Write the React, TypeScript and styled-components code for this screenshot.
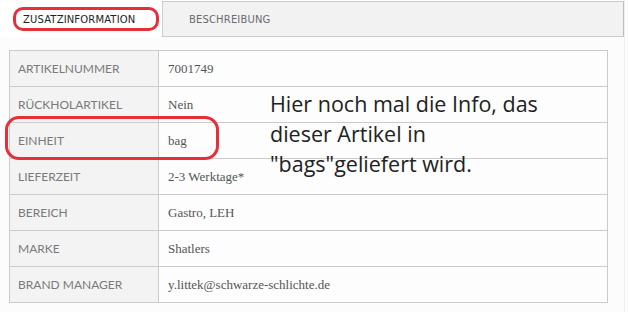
import React from "react";
import styled, { createGlobalStyle } from "styled-components";

const GlobalStyle = createGlobalStyle`
  html, body { margin: 0; padding: 0; background: #fcfcfc; }
  * { box-sizing: border-box; }
`;

const Page = styled.div`
  position: relative;
  width: 628px;
  height: 312px;
  overflow: hidden;
  background: #fcfcfc;
`;

const Frame = styled.div`
  width: 625px;
  height: 312px;
  border-right: 1px solid #efefef;
  background: #fcfcfc;
`;

const TabBar = styled.div`
  display: flex;
  height: 37px;
  padding-top: 1px;
  background: #ffffff;
`;

const Tab = styled.div<{ $active?: boolean }>`
  display: flex;
  align-items: center;
  font-family: "DejaVu Sans", Verdana, sans-serif;
  font-size: 10px;
  letter-spacing: 0.15px;
  ${(p) =>
    p.$active
      ? `
    width: 162px;
    padding-left: 23px;
    color: #222;
    background: #ffffff;
  `
      : `
    flex: 1;
    padding-left: 26px;
    color: #6a6a70;
    background: #f2f2f2;
    border-top: 1px solid #cccccc;
    border-left: 1px solid #cccccc;
    border-bottom: 1px solid #cccccc;
    border-right: 1px solid #bdbdbd;
  `}
`;

const Table = styled.table`
  margin: 13px 0 0 9px;
  width: 599px;
  border-collapse: collapse;
  border: 1px solid #cbcbcb;
`;

const Row = styled.tr`
  height: 36px;
`;

const Label = styled.td`
  width: 149px;
  padding: 0 0 0 8px;
  background: #f3f3f3;
  border: 1px solid #cbcbcb;
  font-family: Lato, "Open Sans", sans-serif;
  font-size: 12px;
  color: #7a7a7a;
  text-transform: uppercase;
  white-space: nowrap;
`;

const Value = styled.td`
  padding: 0 0 0 9px;
  background: #fdfdfd;
  border: 1px solid #cbcbcb;
  font-family: "Liberation Serif", "Times New Roman", serif;
  font-size: 13px;
  color: #555;
  white-space: nowrap;
`;

const Note = styled.div`
  position: absolute;
  left: 270px;
  top: 89px;
  font-family: "Open Sans", "Noto Sans", sans-serif;
  font-size: 21.5px;
  line-height: 30px;
  color: #222;
`;

const Mark = styled.div<{ $x: number; $y: number; $w: number; $h: number; $r: number }>`
  position: absolute;
  left: ${(p) => p.$x}px;
  top: ${(p) => p.$y}px;
  width: ${(p) => p.$w}px;
  height: ${(p) => p.$h}px;
  border: 3px solid #e5303a;
  border-radius: ${(p) => p.$r}px;
  pointer-events: none;
`;

const rows: [string, string][] = [
  ["Artikelnummer", "7001749"],
  ["Rückholartikel", "Nein"],
  ["Einheit", "bag"],
  ["Lieferzeit", "2-3 Werktage*"],
  ["Bereich", "Gastro, LEH"],
  ["Marke", "Shatlers"],
  ["Brand Manager", "y.littek@schwarze-schlichte.de"],
];

export default function App() {
  return (
    <Page>
      <GlobalStyle />
      <Frame>
        <TabBar>
          <Tab $active>ZUSATZINFORMATION</Tab>
          <Tab>BESCHREIBUNG</Tab>
        </TabBar>
        <Table>
          <tbody>
            {rows.map(([l, v]) => (
              <Row key={l}>
                <Label>{l}</Label>
                <Value>{v}</Value>
              </Row>
            ))}
          </tbody>
        </Table>
      </Frame>
      <Note>
        Hier noch mal die Info, das
        <br />
        dieser Artikel in
        <br />
        "bags"geliefert wird.
      </Note>
      <Mark $x={13} $y={7} $w={146} $h={24} $r={10} />
      <Mark $x={5} $y={116} $w={214} $h={44} $r={14} />
    </Page>
  );
}
